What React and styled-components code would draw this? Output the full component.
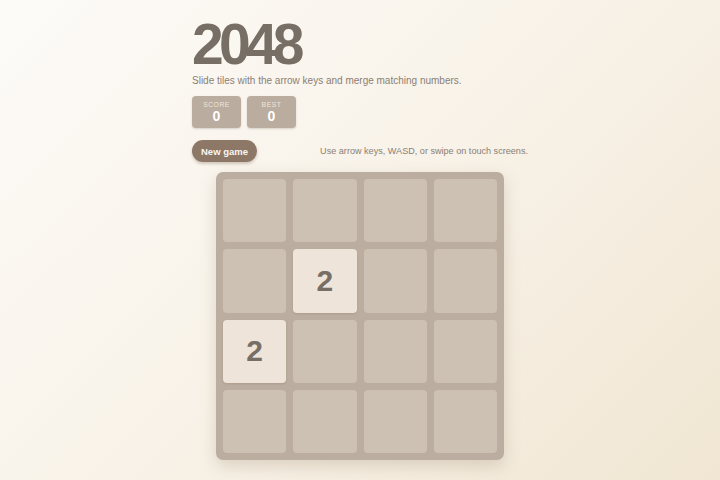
import React, { useState } from 'react';
import styled, { createGlobalStyle } from 'styled-components';

const GlobalStyle = createGlobalStyle`
	html, body {
		margin: 0;
		padding: 0;
	}
	body {
		min-height: 100vh;
		background: linear-gradient(135deg, #fdfbf8 0%, #f8f2e8 50%, #f1e6d3 100%);
		font-family: "Liberation Sans", Arial, sans-serif;
		color: #776e65;
	}
`;

const Page = styled.div`
	display: flex;
	justify-content: center;
	padding-top: 14px;
`;

const Column = styled.div`
	width: 336px;
	display: flex;
	flex-direction: column;
`;

const Title = styled.h1`
	margin: 0;
	font-size: 57px;
	font-weight: 700;
	letter-spacing: -4.8px;
	line-height: 61px;
	color: #776e65;
`;

const Subtitle = styled.p`
	margin: 0;
	font-size: 10px;
	line-height: 12px;
	color: #8a7f75;
`;

const Scores = styled.div`
	display: flex;
	gap: 6px;
	margin-top: 9px;
`;

const ScoreBox = styled.div`
	width: 49px;
	height: 32px;
	box-sizing: border-box;
	border-radius: 4px;
	background: #baac9f;
	display: flex;
	flex-direction: column;
	align-items: center;
	padding-top: 5px;
	box-shadow: 0 1px 2px rgba(120, 100, 80, 0.25);
`;

const ScoreLabel = styled.span`
	font-size: 6.8px;
	letter-spacing: 0.5px;
	text-transform: uppercase;
	color: #efe6dc;
	line-height: 7px;
`;

const ScoreValue = styled.span`
	font-size: 14px;
	font-weight: 700;
	color: #ffffff;
	line-height: 16px;
`;

const Controls = styled.div`
	display: flex;
	align-items: center;
	justify-content: space-between;
	margin-top: 12px;
`;

const NewGame = styled.button`
	height: 22px;
	padding: 0 9px;
	border: none;
	border-radius: 11px;
	background: #8d7767;
	color: #f9f6f2;
	font-family: inherit;
	font-size: 9.5px;
	font-weight: 700;
	cursor: pointer;
	box-shadow: 0 2px 3px rgba(110, 90, 70, 0.3);
`;

const Hint = styled.span`
	font-size: 9.1px;
	color: #8a7f75;
`;

const Board = styled.div`
	align-self: center;
	margin-top: 10px;
	width: 288px;
	height: 288px;
	box-sizing: border-box;
	padding: 7px;
	border-radius: 7px;
	background: #bbad9f;
	display: grid;
	grid-template-columns: repeat(4, 1fr);
	grid-template-rows: repeat(4, 1fr);
	gap: 7px;
	box-shadow: 0 6px 16px rgba(140, 120, 95, 0.25);
`;

const Tile = styled.div`
	border-radius: 4px;
	background: ${(p) => (p.value ? '#eee4da' : '#cdc1b3')};
	display: flex;
	align-items: center;
	justify-content: center;
	font-size: 30px;
	font-weight: 700;
	color: #776e65;
	box-shadow: ${(p) => (p.value ? '0 1px 2px rgba(120, 100, 80, 0.2)' : 'none')};
`;

const initial = [
	0, 0, 0, 0,
	0, 2, 0, 0,
	2, 0, 0, 0,
	0, 0, 0, 0
];

export default function App() {
	const [cells] = useState(initial);

	return (
		<>
			<GlobalStyle />
			<Page>
				<Column>
					<Title>2048</Title>
					<Subtitle>Slide tiles with the arrow keys and merge matching numbers.</Subtitle>
					<Scores>
						<ScoreBox>
							<ScoreLabel>Score</ScoreLabel>
							<ScoreValue>0</ScoreValue>
						</ScoreBox>
						<ScoreBox>
							<ScoreLabel>Best</ScoreLabel>
							<ScoreValue>0</ScoreValue>
						</ScoreBox>
					</Scores>
					<Controls>
						<NewGame>New game</NewGame>
						<Hint>Use arrow keys, WASD, or swipe on touch screens.</Hint>
					</Controls>
					<Board>
						{cells.map((v, i) => (
							<Tile key={i} value={v}>
								{v || ''}
							</Tile>
						))}
					</Board>
				</Column>
			</Page>
		</>
	);
}
